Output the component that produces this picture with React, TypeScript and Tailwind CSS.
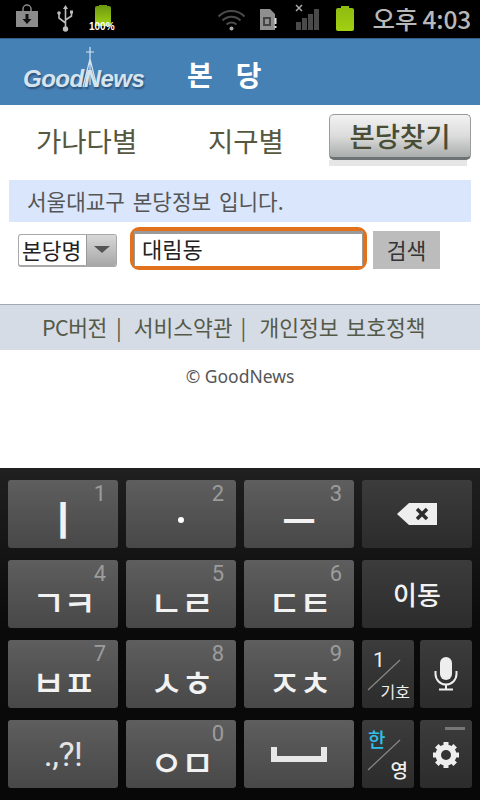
import React from 'react';

const FONT = "font-['Noto_Sans_CJK_KR','Noto_Sans',sans-serif]";

const StatusBar = () => (
  <div className="h-[38px] bg-black flex items-center relative shrink-0">
    {/* download bag */}
    <svg className="absolute left-[15px] top-[4px]" width="24" height="24" viewBox="0 0 24 24">
      <path d="M8 8V5a4 4 0 0 1 8 0v3" fill="none" stroke="#8a8a8a" strokeWidth="1.5" />
      <rect x="1" y="7" width="22" height="16" fill="#8c8c8c" />
      <path d="M10.5 10h3v5h3L12 20l-4.5-5h3z" fill="#111" />
    </svg>
    {/* usb */}
    <svg className="absolute left-[56px] top-[5px]" width="19" height="27" viewBox="0 0 19 27">
      <path d="M9.5 2v22M9.5 18L3 13V9M9.5 15l6-4V8" fill="none" stroke="#bdbdbd" strokeWidth="1.6" />
      <path d="M9.5 0l2.5 4H7z" fill="#bdbdbd" />
      <circle cx="9.5" cy="24" r="2.7" fill="#bdbdbd" />
      <circle cx="3" cy="8" r="1.8" fill="#bdbdbd" />
      <rect x="14" y="5.5" width="3" height="3" fill="#bdbdbd" />
    </svg>
    {/* battery with percent */}
    <div className="absolute left-[95px] top-[6px] w-[16px] h-[20px] rounded-[2px] bg-gradient-to-b from-[#6f9a10] to-[#a4d414]" />
    <div className="absolute left-[99px] top-[5px] w-[8px] h-[2px] bg-[#6f9a10]" />
    <span className="absolute left-[89px] top-[21px] text-[10px] leading-[12px] font-bold text-white font-['Liberation_Sans',sans-serif]">100%</span>
    {/* wifi */}
    <svg className="absolute left-[217px] top-[7px]" width="29" height="24" viewBox="0 0 29 24">
      <path d="M1.5 9.5a18 18 0 0 1 26 0M5.5 13.5a12.5 12.5 0 0 1 18 0M9.5 17.5a7 7 0 0 1 10 0" fill="none" stroke="#4a4a4a" strokeWidth="2" />
      <circle cx="14.5" cy="21.5" r="2" fill="#aaa" />
    </svg>
    {/* sim */}
    <svg className="absolute left-[260px] top-[9px]" width="17" height="21" viewBox="0 0 17 21">
      <path d="M0 0h10l5 5v16H0z" fill="#8f8f8f" />
      <rect x="3" y="8" width="8" height="9" fill="#444" />
      <rect x="5" y="10" width="4" height="5" fill="#8f8f8f" />
      <rect x="14.5" y="9" width="2" height="6" fill="#ddd" />
      <rect x="14.5" y="17" width="2" height="2" fill="#ddd" />
    </svg>
    {/* signal */}
    <svg className="absolute left-[295px] top-[4px]" width="25" height="27" viewBox="0 0 25 27">
      <path d="M1 1l6 6M7 1L1 7" stroke="#aaa" strokeWidth="1.5" />
      <rect x="1" y="18" width="5" height="8" fill="#4a4a4a" />
      <rect x="7" y="14" width="5" height="12" fill="#4a4a4a" />
      <rect x="13" y="10" width="5" height="16" fill="#4a4a4a" />
      <rect x="19" y="5" width="5" height="21" fill="#4a4a4a" />
    </svg>
    {/* battery */}
    <div className="absolute left-[336px] top-[8px] w-[18px] h-[23px] rounded-[2px] bg-gradient-to-b from-[#8fbc10] to-[#a2d012]" />
    <div className="absolute left-[341px] top-[6px] w-[8px] h-[2px] bg-[#8fbc10]" />
    <span className={`absolute right-[9px] top-[1px] text-[24.5px] leading-[36px] font-medium tracking-[-0.2px] text-[#b8b8b8] ${FONT}`}>오후 4:03</span>
  </div>
);

const Header = () => (
  <div className="h-[67px] bg-[#4681b6] border-t border-[#33618c] flex items-center relative shrink-0">
    <svg className="absolute left-[78px] top-[8px]" width="24" height="42" viewBox="0 0 24 42">
      <path d="M12 0v14M8 5h8M12 12L5 40M12 12l7 28M12 14v24" fill="none" stroke="#d6e4f0" strokeWidth="1.2" />
    </svg>
    <span className="ml-[23px] mt-[13px] w-[164px] text-[24px] italic font-bold text-[#d6e4f0] tracking-[-0.5px] font-['Liberation_Sans',sans-serif] [text-shadow:1px_2px_2px_#2c5073]">GoodNews</span>
    <span className={`mt-[3px] text-[28px] font-bold text-white tracking-[23px] ${FONT}`}>본당</span>
  </div>
);

const Tabs = () => (
  <div className="h-[75px] flex shrink-0 relative">
    <span className={`absolute left-[36px] top-[16px] text-[27.5px] leading-[38px] text-[#55583f] ${FONT}`}>가나다별</span>
    <span className={`absolute left-[208px] top-[16px] text-[27.5px] leading-[38px] text-[#55583f] ${FONT}`}>지구별</span>
    <div className="absolute left-[329px] top-[9px] w-[142px] h-[46px] rounded-[5px] border border-[#9a9a9a] border-b-[3px] border-b-[#6d7375] bg-gradient-to-b from-[#f2f2f2] via-[#dcdcdc] to-[#a9adac] flex items-center justify-center">
      <span className={`text-[27.5px] font-medium text-[#4a4d36] ${FONT}`}>본당찾기</span>
    </div>
    <div className="absolute left-[329px] top-[55px] w-[138px] h-[6px] bg-[#e6e6e6]" />
  </div>
);

const SearchRow = () => (
  <div className="flex items-center h-[44px] mt-[4px] shrink-0">
    <div className="ml-[18px] mt-[4px] w-[99px] h-[33px] flex border border-[#a8a8a8] border-b-2 rounded-[3px] overflow-hidden bg-white">
      <span className={`flex-1 text-[21.5px] leading-[30px] pl-[3px] text-[#222] whitespace-nowrap ${FONT}`}>본당명</span>
      <div className="w-[30px] shrink-0 bg-gradient-to-b from-[#d8d8d8] to-[#a8a8a8] border-l border-[#999] flex items-center justify-center">
        <div className="w-0 h-0 border-l-[8px] border-r-[8px] border-t-[7px] border-l-transparent border-r-transparent border-t-[#555]" />
      </div>
    </div>
    <div className="ml-[13px] w-[237px] h-[43px] rounded-[9px] border-[4px] border-[#e2711d]">
      <div className="h-full border-t-[3px] border-x border-[#9a9a9a] bg-white flex items-center px-[7px]">
        <span className={`mb-[3px] text-[22px] leading-[30px] text-[#222] ${FONT}`}>대림동</span>
      </div>
    </div>
    <div className={`ml-[6px] mt-[4px] w-[67px] h-[38px] bg-[#bcbcbc] flex items-center justify-center text-[21.5px] text-[#333] ${FONT}`}>검색</div>
  </div>
);

const Footer = () => (
  <>
    <div className={`mt-[34px] h-[46px] border-t-[1px] border-[#a3a8b3] bg-[#d5dce6] flex items-center text-[21.5px] text-[#555a48] shrink-0 whitespace-nowrap ${FONT}`}>
      <span className="ml-[42px] tracking-[-0.5px]">PC버전</span>
      <span className="ml-[9px]">|</span>
      <span className="ml-[12px]">서비스약관</span>
      <span className="ml-[8px]">|</span>
      <span className="ml-[13px] [word-spacing:3px]">개인정보 보호정책</span>
    </div>
    <div className="mt-[14px] text-center text-[17.5px] leading-[24px] text-[#555] font-['Noto_Sans',sans-serif]">© GoodNews</div>
  </>
);

const Key = ({ label, num, dark, className = '', big }: { label?: React.ReactNode; num?: string; dark?: boolean; className?: string; big?: boolean }) => (
  <div className={`relative h-[68px] rounded-[3px] flex items-center justify-center text-[#f2f2f2] ${dark ? 'bg-gradient-to-b from-[#3c3c3c] to-[#2c2c2c]' : 'bg-gradient-to-b from-[#5e5e5e] to-[#484848]'} ${className}`}>
    {num && <span className="absolute right-[12px] top-[4px] text-[22px] leading-[20px] text-[#9c9c9c] font-['Roboto',sans-serif]">{num}</span>}
    <span className={`${big ? 'mt-[14px] text-[36px] tracking-[-2px] leading-[30px]' : 'leading-none'} font-medium ${FONT}`}>{label}</span>
  </div>
);

const Slash = () => (
  <svg className="absolute inset-0" width="52" height="68" viewBox="0 0 52 68">
    <path d="M6 50L38 20" stroke="#888" strokeWidth="1.2" />
  </svg>
);

const Keyboard = () => (
  <div className="h-[332px] mt-auto shrink-0 bg-gradient-to-b from-[#202020] via-[#0a0a0a] to-[#080808] px-[8px] pt-[12px] grid grid-cols-[110px_110px_110px_110px] gap-x-[8px] gap-y-[12px] content-start">
    <Key num="1" label={<span className="block mt-[8px] text-[40px] leading-[40px] font-bold">ㅣ</span>} />
    <Key num="2" label={<span className="block mt-[12px] w-[6px] h-[6px] rounded-full bg-white" />} />
    <Key num="3" label={<span className="block mt-[10px] text-[36px] leading-[36px] font-bold">ㅡ</span>} />
    <Key dark label={
      <svg width="42" height="24" viewBox="0 0 42 24">
        <path d="M13 1h28v22H13L1 12z" fill="#eee" />
        <path d="M21 7l10 10M31 7L21 17" stroke="#2c2c2c" strokeWidth="3.5" />
      </svg>
    } />

    <Key big num="4" label="ㄱㅋ" />
    <Key big num="5" label="ㄴㄹ" />
    <Key big num="6" label="ㄷㅌ" />
    <Key dark label={<span className="text-[26px] font-medium">이동</span>} />

    <Key big num="7" label="ㅂㅍ" />
    <Key big num="8" label="ㅅㅎ" />
    <Key big num="9" label="ㅈㅊ" />
    <div className="flex gap-[6px]">
      <div className="relative w-[52px] h-[68px] rounded-[3px] bg-gradient-to-b from-[#3c3c3c] to-[#2c2c2c] text-[#eee]">
        <Slash />
        <span className="absolute left-[11px] top-[8px] text-[21px] leading-[24px] font-['Roboto',sans-serif]">1</span>
        <span className={`absolute right-[4px] bottom-[7px] text-[16px] leading-[20px] ${FONT}`}>기호</span>
      </div>
      <div className="w-[52px] h-[68px] rounded-[3px] bg-gradient-to-b from-[#3c3c3c] to-[#2c2c2c] flex items-center justify-center">
        <svg width="24" height="34" viewBox="0 0 24 34">
          <rect x="6" y="0" width="12" height="23" rx="6" fill="#eee" />
          <path d="M1.5 14v3a10.5 10.5 0 0 0 21 0v-3M12 28v4M5 32.5h14" fill="none" stroke="#eee" strokeWidth="2" />
        </svg>
      </div>
    </div>

    <Key label={<span className="text-[34px] font-normal tracking-[-0.5px] text-[#e4e4e4] font-['Roboto',sans-serif]">.,?!</span>} />
    <Key big num="0" label="ㅇㅁ" />
    <Key label={
      <svg width="56" height="16" viewBox="0 0 56 16" className="mt-[2px]">
        <path d="M0 0h6v9h44V0h6v15H0z" fill="#e8e8e8" />
      </svg>
    } />
    <div className="flex gap-[6px]">
      <div className="relative w-[52px] h-[68px] rounded-[3px] bg-gradient-to-b from-[#3c3c3c] to-[#2c2c2c]">
        <Slash />
        <span className={`absolute left-[6px] top-[7px] text-[19px] leading-[24px] font-medium text-[#2fc0e8] ${FONT}`}>한</span>
        <span className={`absolute right-[6px] bottom-[6px] text-[19px] leading-[24px] font-medium text-[#eee] ${FONT}`}>영</span>
      </div>
      <div className="relative w-[52px] h-[68px] rounded-[3px] bg-gradient-to-b from-[#3c3c3c] to-[#2c2c2c] flex items-center justify-center">
        <div className="absolute right-[7px] top-[7px] w-[20px] h-[3px] bg-[#777]" />
        <svg width="28" height="28" viewBox="0 0 28 28" className="mt-[2px]">
          <circle cx="14" cy="14" r="8" fill="none" stroke="#eee" strokeWidth="5" />
          <path d="M14 1v26M1 14h26M4.8 4.8l18.4 18.4M23.2 4.8L4.8 23.2" stroke="#eee" strokeWidth="5" />
          <circle cx="14" cy="14" r="5" fill="#333" />
        </svg>
      </div>
    </div>
  </div>
);

export default function App() {
  return (
    <div className="w-[480px] h-[800px] flex flex-col overflow-hidden bg-white">
      <StatusBar />
      <Header />
      <Tabs />
      <div className={`mx-[9px] h-[42px] bg-[#d9e6fb] flex items-center pl-[18px] text-[21.3px] text-[#555] shrink-0 [word-spacing:3px] ${FONT}`}>서울대교구 본당정보 입니다.</div>
      <SearchRow />
      <Footer />
      <Keyboard />
    </div>
  );
}
